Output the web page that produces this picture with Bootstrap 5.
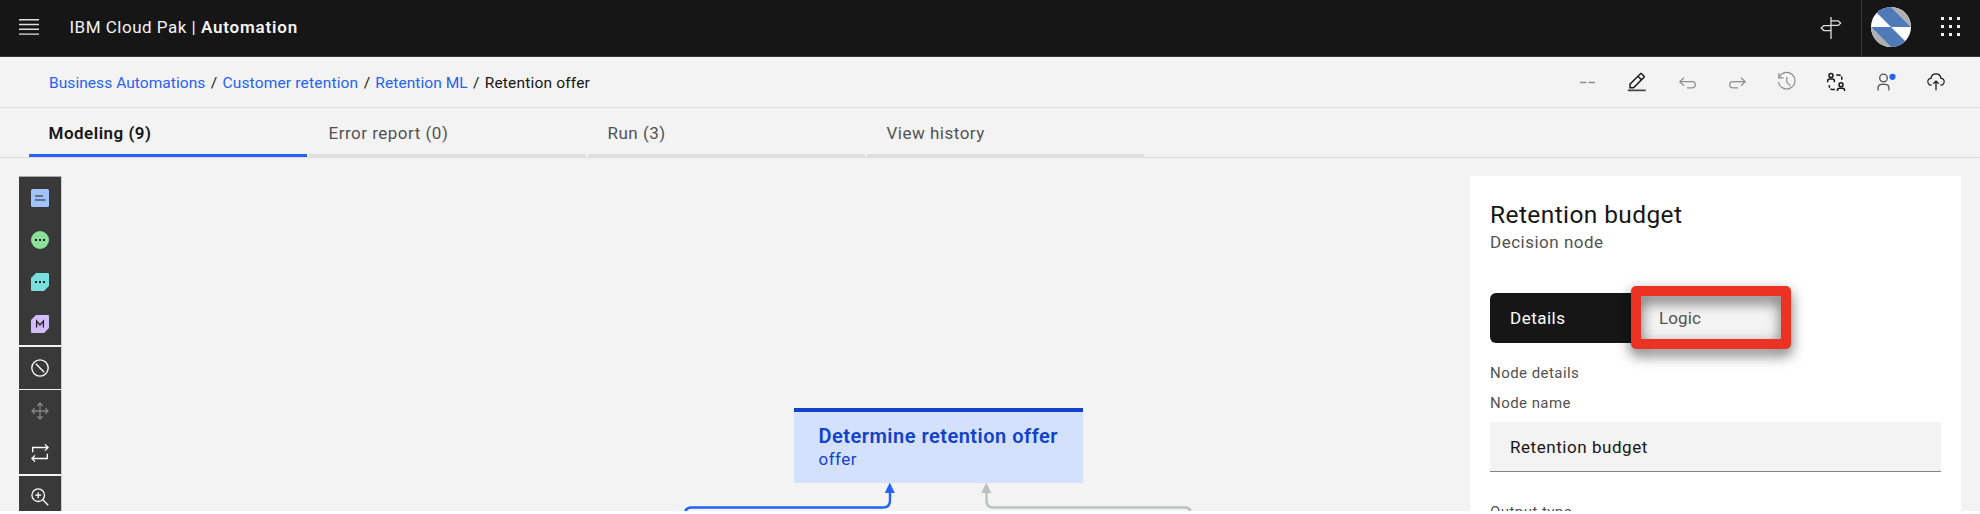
<!doctype html>
<html lang="en">
<head>
<meta charset="utf-8">
<title>Retention offer</title>
<meta name="viewport" content="width=device-width, initial-scale=1">
<link href="https://cdn.jsdelivr.net/npm/bootstrap@5.3.0/dist/css/bootstrap.min.css" rel="stylesheet">
<style>
  body { font-family: Roboto, sans-serif; font-size: 17px; line-height: 24px; letter-spacing: .5px; color: #161616; background: #fff; overflow: hidden; white-space: nowrap; }
  svg { display: block; flex: none; }
  .app { height: 511px; background: #f3f3f3; overflow: hidden; }
  .topbar { height: 57px; background: #161616; border-bottom: 1px solid #393939; color: #f4f4f4; padding: 0 19px 2px 19px; }
  .brand { margin-left: 30.5px; }
  .brand .fw-semibold { letter-spacing: .8px; }
  .top-split { width: 1px; height: 56px; background: #393939; margin: 2px 9px 0 19px; }
  .crumbs { height: 51px; padding: 1px 34px 0 49px; border-bottom: 1px solid #dcdcdc; font-size: 15.5px; letter-spacing: .06px; }
  .crumbs a { color: #2563f0; text-decoration: none; }
  .crumbs .sep { width: 17px; text-align: center; letter-spacing: 0; }
  .crumbs .wide { letter-spacing: .18px; }
  .tools { gap: 27.6px; padding-bottom: 2px; }
  .tools svg:last-child { margin-left: 1.5px; }
  .tabs { height: 50px; padding-left: 29px; gap: 2px; border-bottom: 1px solid #dcdcdc; }
  .tabs .nav-link { width: 277px; height: 49px; padding: 13px 0 0 19.5px; border: 0; border-bottom: 3px solid #e0e0e0; border-radius: 0; color: #525252; }
  .tabs .nav-link:nth-child(1) { width: 278px; }
  .tabs .nav-link.active { border-color: #2563fa; color: #161616; font-weight: 600; background: none; }
  .work { padding: 18px 19px 0 19px; height: 353px; }
  .palette { width: 42px; box-shadow: 1px 0 0 #cfcfcf; color: #fff; }
  .palette > div { background: #393939; display: flex; flex-direction: column; align-items: center; gap: 24px; }
  .canvas { position: relative; height: 335px; }
  .dnode { position: absolute; left: 733px; top: 232px; width: 289px; height: 75px; background: #d3e1fd; border-top: 4px solid #1242c8; padding: 12px 24.5px; color: #1242c8; }
  .dnode strong { display: block; font-size: 20px; line-height: 25px; font-weight: 600; letter-spacing: .5px; }
  .dnode span { display: block; line-height: 20px; }
  .edges { position: absolute; left: 613px; top: 307px; }
  .inspector { width: 491px; height: 335px; background: #fff; padding: 24px 20px 0; color: #525252; }
  .inspector h1 { font-size: 24.5px; line-height: 30px; font-weight: 400; letter-spacing: .4px; color: #161616; margin: 0; }
  .switcher { position: relative; width: 300px; height: 50px; margin-top: 39px; }
  .switcher .on { width: 150px; background: #161616; color: #fff; border-radius: 6px 0 0 6px; padding: 13px 20px; }
  .switcher .off { width: 145px; background: #f3f3f3; padding: 13px 19px; letter-spacing: .1px; }
  .marker { position: absolute; left: 141px; top: -7px; width: 160px; height: 63px; border: 10px solid #eb3223; border-radius: 5px; filter: drop-shadow(0 6px 7px rgba(0,0,0,.6)); }
  .lbl { font-size: 15px; line-height: 20px; letter-spacing: .45px; }
  .inspector .form-control { width: 451px; height: 50px; border: 0; border-bottom: 1px solid #858585; border-radius: 0; background: #f3f3f3; padding: 0 20px; font-size: 17px; letter-spacing: .55px; color: #161616; }
</style>
</head>
<body>
<div class="app">
  <header class="topbar d-flex align-items-center">
    <svg width="20" height="18" viewBox="0 0 20 18" fill="#e0e0e0"><path d="M0 1h20v1.4H0zM0 5.8h20v1.4H0zM0 10.6h20v1.4H0zM0 15.4h20v1.4H0z"/></svg>
    <div class="brand">IBM Cloud Pak | <span class="fw-semibold">Automation</span></div>
    <svg class="ms-auto" width="22" height="24" viewBox="0 0 22 24" fill="none" stroke="#e0e0e0" stroke-width="1.3"><path d="M11 2v22M11 5.800h7.200l2.400 2.300-2.400 2.300H11M11 10.600H3.900L1.200 13.100l2.700 2.500H11"/></svg>
    <div class="top-split"></div>
    <svg width="40" height="40" viewBox="0 0 40 40"><defs><clipPath id="av"><circle cx="20" cy="20" r="20"/></clipPath></defs><g clip-path="url(#av)"><path fill="#fff" d="M0 0h40v40H0z"/><path fill="#b0b0b0" d="M20 0h20v20zM0 20l20 20H0z"/><path fill="#5079b8" d="M0 0h20l20 20H20zM0 20h20l20 20H20z"/></g></svg>
    <svg style="margin-left:30px" width="20" height="20" viewBox="0 0 20 20" fill="#f4f4f4"><path d="M0 0h3v3H0zM8 0h3v3H8zM16 0h3v3h-3zM0 8h3v3H0zM8 8h3v3H8zM16 8h3v3h-3zM0 16h3v3H0zM8 16h3v3H8zM16 16h3v3h-3z"/></svg>
  </header>

  <div class="crumbs d-flex align-items-center">
    <a href="#">Business Automations</a><span class="sep">/</span><a href="#" class="wide">Customer retention</a><span class="sep">/</span><a href="#">Retention ML</a><span class="sep">/</span><span class="wide">Retention offer</span>
    <div class="tools d-flex align-items-center ms-auto">
      <svg width="20" height="20" viewBox="0 0 20 20" stroke="#8d8d8d" stroke-width="1.300"><path d="M2 10.500h6.500M10.500 10.500H17"/></svg>
      <svg width="23" height="20" viewBox="0 0 32 28" fill="#161616"><path d="M2.500 24.500h25v2.400h-25z" fill="#444"/><path transform="translate(.5 -1)" d="M25.400 9c.8-.8.8-2 0-2.800l-3.600-3.600c-.8-.8-2-.8-2.800 0l-15 15V24h6.400l15-15zm-5-5L24 7.600l-3 3L17.400 7l3-3zM6 22v-3.600l10-10 3.600 3.600-10 10H6z"/></svg>
      <svg width="22" height="20" viewBox="0 0 22 20" fill="none" stroke="#8d8d8d" stroke-width="1.200"><path d="M7 5.700 2.800 9.700 7 13.700M3 9.700h12.200a3.100 3.100 0 0 1 0 6.200H10"/></svg>
      <svg width="22" height="20" viewBox="0 0 22 20" fill="none" stroke="#8d8d8d" stroke-width="1.200"><path d="M15 5.700 19.200 9.700 15 13.700M19 9.700H6.800a3.100 3.100 0 0 0 0 6.200H12"/></svg>
      <svg width="22" height="22" viewBox="0 0 22 22" fill="none" stroke="#8d8d8d" stroke-width="1.200"><path d="M3 6.500A8.300 8.300 0 1 1 2.500 11M2.800 2.200v4.600h4.800M10.800 6v5.300l3.600 3.600"/></svg>
      <svg width="22" height="22" viewBox="0 0 22 22" fill="none" stroke="#161616" stroke-width="1.500"><circle cx="6" cy="4.500" r="2"/><path d="M2.700 11.300V10a1.900 1.900 0 0 1 1.900-1.900h2.900A1.900 1.900 0 0 1 9.400 10v1.300"/><circle cx="16" cy="13.700" r="2"/><path d="M12.400 20v-.8a1.900 1.900 0 0 1 1.900-1.900h3.400a1.900 1.900 0 0 1 1.900 1.900v.8"/><path d="M11.300 3.900h2.500a3 3 0 0 1 3 3v1.800M9.800 18.500H7.500a3.200 3.200 0 0 1-3.200-3.200v-1.100" stroke-dasharray="4.500 1.200"/></svg>
      <svg width="22" height="22" viewBox="0 0 22 22" fill="none" stroke="#525252" stroke-width="1.300"><circle cx="8.500" cy="7" r="3.800"/><path d="M3.100 19.600v-2.800a3.500 3.500 0 0 1 3.500-3.500h3.800a3.500 3.500 0 0 1 3.500 3.500v2.800"/><circle cx="17.500" cy="5.800" r="3.100" fill="#2563fa" stroke="none"/></svg>
      <svg width="20" height="20" viewBox="0 0 32 32" fill="#161616"><path d="M11 18l1.410 1.410L15 16.830V29h2V16.830l2.590 2.580L21 18l-5-5-5 5z"/><path d="M23.500 22H23v-2h.5a4.500 4.500 0 0 0 .36-9H23l-.1-.82a7 7 0 0 0-13.880 0L9 11h-.86a4.500 4.500 0 0 0 .36 9H9v2h-.5A6.500 6.500 0 0 1 7.200 9.140a9 9 0 0 1 17.600 0A6.500 6.500 0 0 1 23.500 22z"/></svg>
    </div>
  </div>

  <nav class="tabs nav flex-nowrap">
    <a class="nav-link active" href="#">Modeling (9)</a>
    <a class="nav-link" href="#">Error report (0)</a>
    <a class="nav-link" href="#">Run (3)</a>
    <a class="nav-link" href="#">View history</a>
  </nav>

  <main class="work d-flex">
    <div class="palette flex-shrink-0 d-flex flex-column">
      <div style="height:169px;padding-top:12px;border-top:1px solid #a8a8a8">
        <svg width="18" height="18" viewBox="0 0 18 18"><rect width="18" height="18" rx="1.500" fill="#a1c3fb"/><path d="M4 7h8M4 11h10.500" stroke="#222" stroke-width="1.200"/></svg>
        <svg width="18" height="18" viewBox="0 0 18 18"><circle cx="9" cy="9" r="9" fill="#8bdf98"/><path d="M4 8h2v2H4zM8 8h2v2H8zM12 8h2v2h-2z" fill="#222"/></svg>
        <svg width="18" height="18" viewBox="0 0 18 18"><path d="M5 0h12q1 0 1 1v12l-5 5H1q-1 0-1-1V5z" fill="#78dede"/><path d="M4 8h2v2H4zM8 8h2v2H8zM12 8h2v2h-2z" fill="#222"/></svg>
        <svg width="18" height="18" viewBox="0 0 18 18"><path d="M5 0h12q1 0 1 1v12l-5 5H1q-1 0-1-1V5z" fill="#d3bdf9"/><path d="M5.600 12.500V6l3.400 4 3.400-4v6.500" fill="none" stroke="#222" stroke-width="1.300"/></svg>
      </div>
      <div style="height:42px;margin-top:2px;padding-top:12px">
        <svg width="18" height="18" viewBox="0 0 18 18" fill="none" stroke="#fff" stroke-width="1.300"><circle cx="9" cy="9" r="8.200"/><path d="m4.800 4.800 8.400 8.400"/></svg>
      </div>
      <div style="height:84px;margin-top:1px;padding-top:12px">
        <svg width="18" height="18" viewBox="0 0 18 18" fill="none" stroke="#858585" stroke-width="1.300"><path d="M9 1v16M1 9h16M6.300 3.700 9 1l2.700 2.700M6.300 14.300 9 17l2.700-2.700M3.700 6.300 1 9l2.700 2.700M14.300 6.300 17 9l-2.700 2.700"/></svg>
        <svg width="18" height="18" viewBox="0 0 18 18" fill="none" stroke="#fff" stroke-width="1.300"><path d="M1.700 8.300V3.500H17M14 .4l3.100 3.100L14 6.600M16.300 9.700v4.800H1M4 11.400.9 14.500 4 17.600"/></svg>
      </div>
      <div class="flex-grow-1" style="margin-top:2px;padding-top:12px">
        <svg width="18" height="18" viewBox="0 0 18 18" fill="none" stroke="#fff" stroke-width="1.300"><circle cx="7.200" cy="7.200" r="6.300"/><path d="m11.800 11.800 5.400 5.400M7.200 4.200v6M4.200 7.200h6"/></svg>
      </div>
    </div>

    <div class="canvas flex-grow-1">
      <svg class="edges" width="524" height="29" viewBox="0 0 524 29" fill="none" stroke-width="2.400">
        <path stroke="#2563fa" d="M11 34v-3q0-6.500 6.500-6.500H209q7 0 7-7V9"/><path fill="#2563fa" d="m215.800-.5 5 10.500h-10z"/>
        <path stroke="#b9c2c0" d="M517 34v-3q0-6.500-6.500-6.500H319.500q-7 0-7-7V9"/><path fill="#b9c2c0" d="m312.300-.5 5 10.500h-10z"/>
      </svg>
      <div class="dnode"><strong>Determine retention offer</strong><span>offer</span></div>
    </div>

    <aside class="inspector flex-shrink-0">
      <h1>Retention budget</h1>
      <div>Decision node</div>
      <div class="switcher d-flex" role="tablist">
        <div class="on">Details</div>
        <div class="off">Logic</div>
        <div class="marker"></div>
      </div>
      <div class="lbl" style="margin-top:20px">Node details</div>
      <label class="lbl d-block" style="margin-top:10px" for="node-name">Node name</label>
      <input class="form-control" style="margin-top:9px" id="node-name" value="Retention budget">
      <div class="lbl" style="margin-top:30px">Output type</div>
    </aside>
  </main>
</div>
<script src="https://cdn.jsdelivr.net/npm/bootstrap@5.3.0/dist/js/bootstrap.bundle.min.js"></script>
</body>
</html>
